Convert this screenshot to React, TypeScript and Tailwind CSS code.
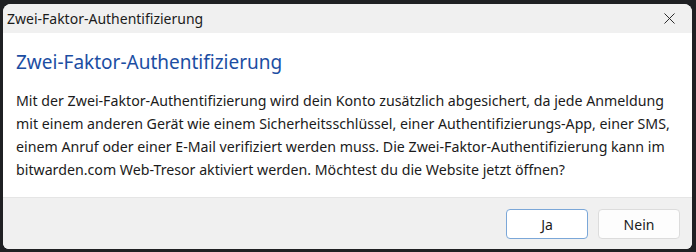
import { X } from "lucide-react"

const font = { fontFamily: '"Noto Sans", "Open Sans", sans-serif' }

export default function App() {
  return (
    <div className="h-[252px] w-[696px] overflow-hidden bg-[#1f2023] pl-[3px] pt-[4px]" style={font}>
      <div className="flex h-[245px] w-[689px] flex-col overflow-hidden rounded-t-[8px] rounded-b-[6px] bg-white">
        <div className="flex h-[29px] shrink-0 items-center justify-between bg-[#f0f0f0] pl-[4px] pr-[13px]">
          <span className="text-[14px] text-[#1b1b1b]">Zwei-Faktor-Authentifizierung</span>
          <X className="h-[19px] w-[19px] text-[#222]" strokeWidth={1.2} />
        </div>
        <div className="flex-1 px-[13px] pt-[15px]">
          <div className="text-[19px] leading-[28px] text-[#1c4ea3]">Zwei-Faktor-Authentifizierung</div>
          <div className="mt-[13px] whitespace-nowrap text-[14.2px] leading-[23px] text-[#1b1b1b]">
            <div>Mit der Zwei-Faktor-Authentifizierung wird dein Konto zusätzlich abgesichert, da jede Anmeldung</div>
            <div>mit einem anderen Gerät wie einem Sicherheitsschlüssel, einer Authentifizierungs-App, einer SMS,</div>
            <div>einem Anruf oder einer E-Mail verifiziert werden muss. Die Zwei-Faktor-Authentifizierung kann im</div>
            <div>bitwarden.com Web-Tresor aktiviert werden. Möchtest du die Website jetzt öffnen?</div>
          </div>
        </div>
        <div className="flex h-[52px] shrink-0 items-start justify-end gap-[10px] border-t border-[#e5e5e5] bg-[#f0f0f0] pr-[12px] pt-[11px]">
          <button className="h-[30px] w-[82px] rounded-[4px] border border-[#7ba7d8] bg-white text-[14px] text-[#1b1b1b]">
            Ja
          </button>
          <button className="h-[30px] w-[82px] rounded-[4px] border border-[#dcdcdc] bg-[#fdfdfd] text-[14px] text-[#1b1b1b]">
            Nein
          </button>
        </div>
      </div>
    </div>
  )
}
